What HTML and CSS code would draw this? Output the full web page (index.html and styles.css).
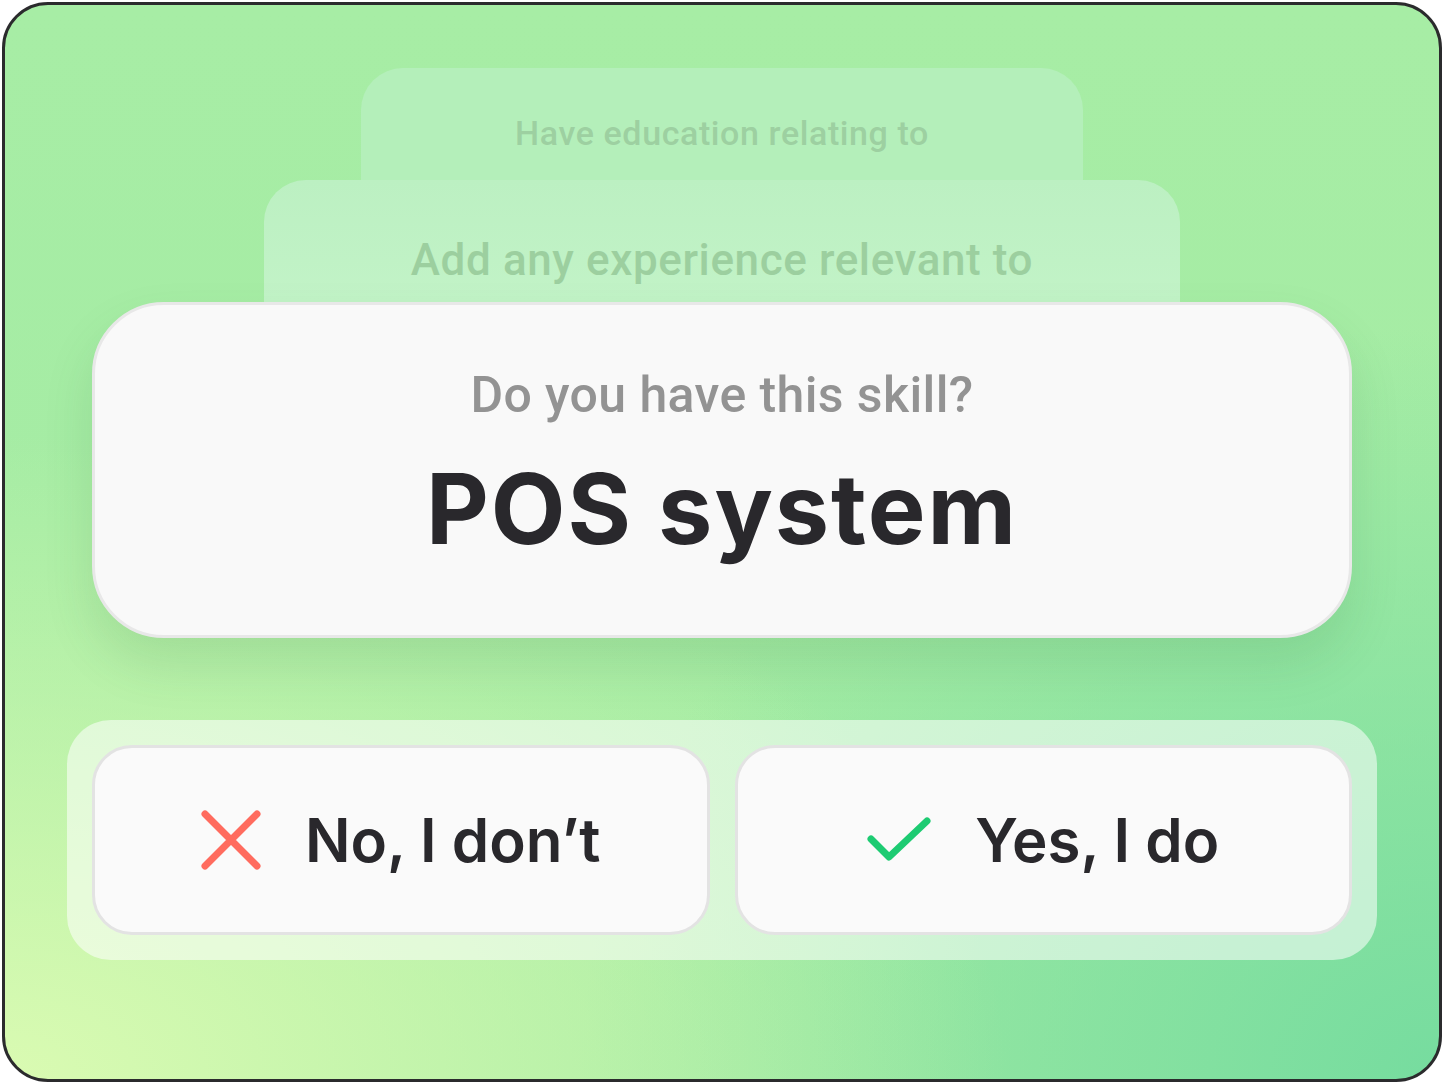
FILE: index.html
```html
<!DOCTYPE html>
<html lang="en">
<head>
  <meta charset="UTF-8">
  <meta name="viewport" content="width=device-width, initial-scale=1.0">
  <title>Skill check</title>
  <link rel="stylesheet" href="styles.css">
</head>
<body>
  <div class="frame">
    <!-- cartas anteriores, empilhadas atrás -->
    <div class="peek peek-back">
      <p>Have education relating to</p>
    </div>
    <div class="peek peek-mid">
      <p>Add any experience relevant to</p>
    </div>

    <!-- carta atual -->
    <div class="skill-card">
      <p class="question">Do you have this skill?</p>
      <h1 class="skill">POS system</h1>
    </div>

    <!-- respostas -->
    <div class="answers">
      <button class="answer">
        <svg class="icon-no" viewBox="0 0 60 60" width="60" height="60">
          <path d="M4 4 L56 56 M56 4 L4 56" stroke="#ff6b5e" stroke-width="7" stroke-linecap="round" fill="none"/>
        </svg>
        <span>No, I don’t</span>
      </button>
      <button class="answer">
        <svg class="icon-yes" viewBox="0 0 64 46" width="64" height="46">
          <path d="M4 22 L22 40 L60 4" stroke="#1dcb72" stroke-width="7" stroke-linecap="round" stroke-linejoin="round" fill="none"/>
        </svg>
        <span>Yes, I do</span>
      </button>
    </div>
  </div>
</body>
</html>
```

FILE: styles.css
```css
body {
  margin: 0;
  background-color: #ffffff;
  font-family: Inter, "Noto Sans", sans-serif;
}

.frame {
  width: 1440px;
  height: 1080px;
  margin: 2px;
  box-sizing: border-box;
  border: 3px solid #2b2b2d;
  border-radius: 46px;
  overflow: hidden;
  display: flex;
  flex-direction: column;
  align-items: center;
  padding-top: 63px;
  background:
    radial-gradient(ellipse 70% 60% at 0% 100%, #dafbb2 0%, rgba(218, 251, 178, 0) 100%),
    radial-gradient(ellipse 60% 70% at 100% 100%, #76dc9f 0%, rgba(118, 220, 159, 0) 100%),
    linear-gradient(180deg, #a7eda5 0%, #a3eba3 100%);
}

/* cartas de trás */
.peek {
  box-sizing: border-box;
  border-radius: 42px 42px 0 0;
  text-align: center;
  font-family: Roboto, sans-serif;
  font-weight: 500;
}

.peek p {
  margin: 0;
}

.peek-back {
  width: 722px;
  height: 112px;
  padding-top: 45px;
  background-color: #b4efba;
  font-size: 34px;
  line-height: 40px;
  letter-spacing: 0.6px;
  color: #9dd0a1;
}

.peek-mid {
  width: 916px;
  height: 122px;
  padding-top: 55px;
  background: linear-gradient(180deg, #bcf0c2 0%, #c2f3c7 100%);
  font-size: 44px;
  line-height: 50px;
  letter-spacing: 0.6px;
  color: #9ccf9f;
}

/* carta principal */
.skill-card {
  width: 1260px;
  height: 336px;
  box-sizing: border-box;
  border: 3px solid #e8e8e8;
  border-radius: 72px;
  background-color: #f9f9f9;
  box-shadow: 0 26px 50px rgba(40, 100, 50, 0.13);
  display: flex;
  flex-direction: column;
  align-items: center;
  padding-top: 61px;
  position: relative;
}

.question {
  margin: 0;
  font-family: Roboto, sans-serif;
  font-weight: 500;
  font-size: 50px;
  line-height: 58px;
  letter-spacing: 0.4px;
  color: #939393;
}

.skill {
  margin: 36px 0 0;
  font-weight: 700;
  font-size: 97px;
  line-height: 97px;
  letter-spacing: 2px;
  color: #29282c;
}

/* bandeja das respostas */
.answers {
  width: 1310px;
  height: 240px;
  margin-top: 82px;
  box-sizing: border-box;
  padding: 25px;
  border-radius: 44px;
  background-color: rgba(255, 255, 255, 0.55);
  display: grid;
  grid-template-columns: 1fr 1fr;
  gap: 25px;
}

.answer {
  box-sizing: border-box;
  border: 3px solid #e3e3e3;
  border-radius: 40px;
  background-color: #fafafa;
  display: flex;
  align-items: center;
  justify-content: center;
  gap: 44px;
  font-family: Inter, sans-serif;
  font-weight: 600;
  font-size: 60px;
  color: #29282c;
  cursor: pointer;
  padding: 0;
}

.answer svg {
  flex-shrink: 0;
}
```
